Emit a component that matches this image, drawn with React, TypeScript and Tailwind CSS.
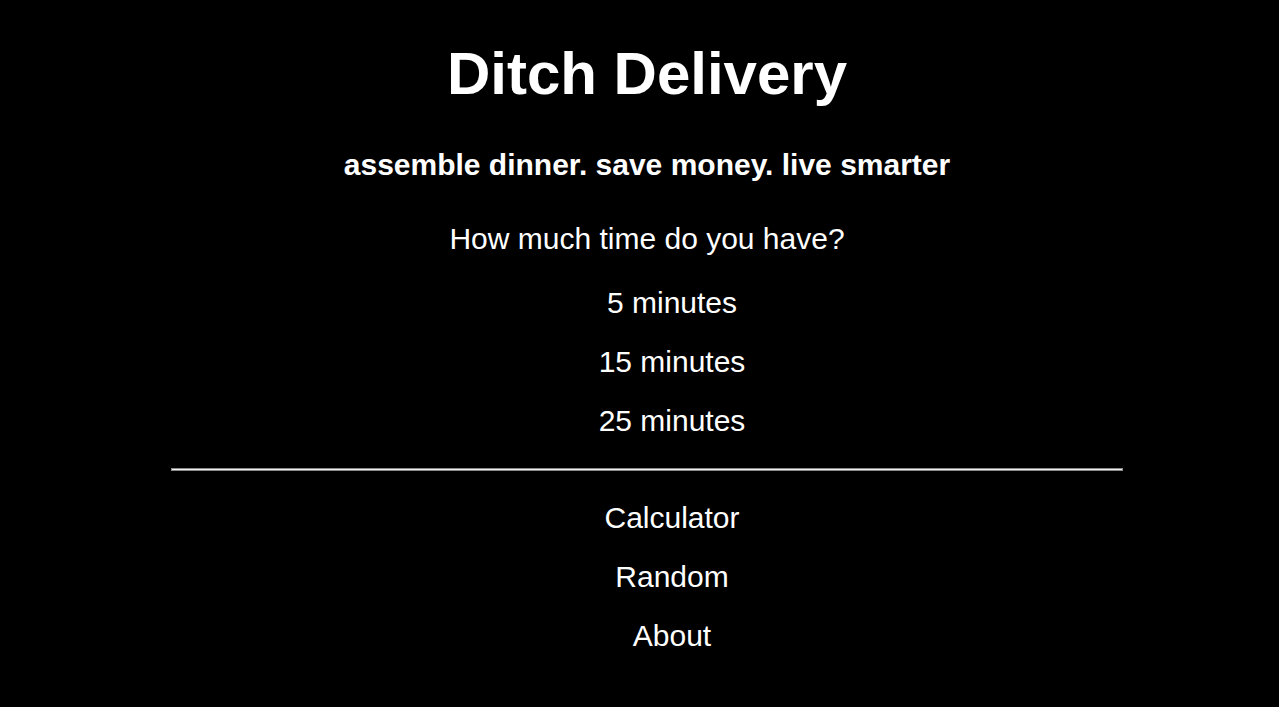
import React from "react";

const times = ["5 minutes", "15 minutes", "25 minutes"];
const links = ["Calculator", "Random", "About"];

const App = () => {
  return (
    <div className="min-h-[707px] w-full bg-black text-white font-['Liberation_Sans',Arial,sans-serif]">
      <div className="flex flex-col items-center pl-[15px] pt-[39px]">
        <h1 className="text-[60px] leading-[70px] font-bold">Ditch Delivery</h1>
        <h3 className="mt-[36px] text-[30px] leading-[40px] font-bold">
          assemble dinner. save money. live smarter
        </h3>
        <p className="mt-[34px] text-[30px] leading-[40px]">How much time do you have?</p>
        <ul className="mt-[14px] flex flex-col items-center pl-[50px]">
          {times.map((t) => (
            <li key={t} className="text-[30px] leading-[59px] cursor-pointer">
              {t}
            </li>
          ))}
        </ul>
        <hr className="mt-[18px] h-[3px] w-[952px] border border-[#8a8a8a] bg-[#f0f0f0]" />
        <ul className="mt-[17px] flex flex-col items-center pl-[50px]">
          {links.map((l) => (
            <li key={l} className="text-[30px] leading-[59px] cursor-pointer">
              {l}
            </li>
          ))}
        </ul>
      </div>
    </div>
  );
};

export default App;
